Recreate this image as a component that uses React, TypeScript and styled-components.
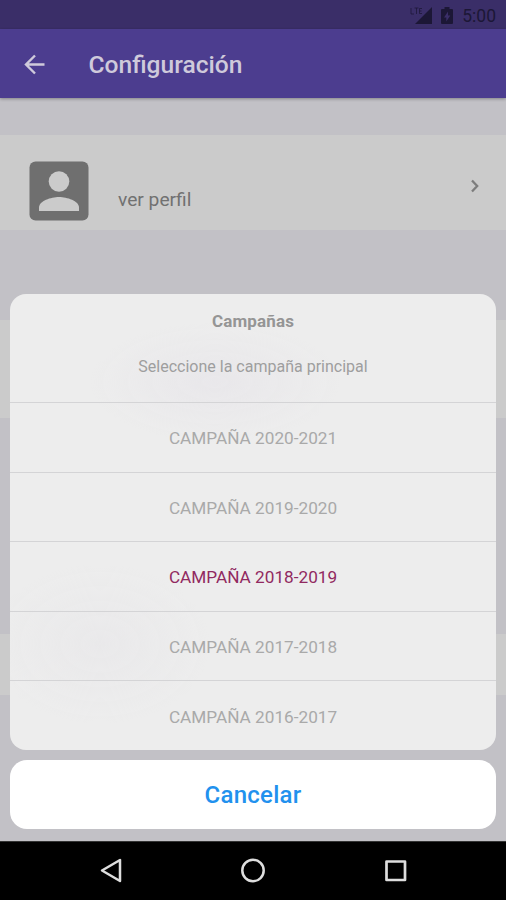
import React from "react";
import styled, { createGlobalStyle } from "styled-components";

const GlobalStyle = createGlobalStyle`
  *, *::before, *::after { box-sizing: border-box; }
  body { margin: 0; font-family: Roboto, "Noto Sans", sans-serif; }
  button { font-family: inherit; border: 0; padding: 0; background: none; }
`;

const Screen = styled.div`
  position: relative;
  display: flex;
  flex-direction: column;
  width: 506px;
  height: 900px;
  overflow: hidden;
  background: #c2c1c6;
`;

const StatusBar = styled.div`
  display: flex;
  align-items: center;
  justify-content: flex-end;
  height: 29px;
  flex: none;
  padding: 2px 10px 0 0;
  background: #3a2e68;
  color: #1c1736;
  font-size: 17.5px;
`;

const SignalIcon = styled.svg`
  margin-right: 9px;
`;

const BatteryIcon = styled.svg`
  margin-right: 9px;
`;

const AppBar = styled.header`
  display: flex;
  align-items: center;
  height: 69px;
  flex: none;
  padding: 2px 24px 0;
  background: #4c3d8f;
  color: #cfcadb;
  box-shadow: 0 1px 3px rgba(0, 0, 0, 0.32);
  z-index: 1;
`;

const Title = styled.h1`
  margin: 0 0 0 42.5px;
  font-size: 24.6px;
  font-weight: 500;
  line-height: 30px;
`;

const Content = styled.main`
  display: flex;
  flex-direction: column;
  flex: 1;
  padding-top: 37px;
`;

const ListCard = styled.section<{ $height: number; $gap: number }>`
  display: flex;
  align-items: center;
  height: ${(p) => p.$height}px;
  margin-bottom: ${(p) => p.$gap}px;
  padding: 0 26px 0 29px;
  flex: none;
  background: #cbcbcb;
`;

const Avatar = styled.svg`
  margin-top: 16px;
`;

const Chevron = styled.svg`
  margin-top: 6px;
`;

const ProfileLabel = styled.span`
  flex: 1;
  margin: 35px 0 0 29px;
  color: #717171;
  font-size: 19.2px;
  line-height: 24px;
`;

const Sheet = styled.div`
  position: absolute;
  left: 9.7px;
  right: 9.7px;
  bottom: 71.5px;
  display: flex;
  flex-direction: column;
  gap: 9.5px;
  z-index: 2;
`;

const OptionPanel = styled.div`
  display: flex;
  flex-direction: column;
  overflow: hidden;
  border-radius: 16px;
  height: 456.5px;
  background:
    radial-gradient(ellipse 125px 60px at 205px 88px, rgba(222, 217, 228, 0.28), transparent),
    radial-gradient(ellipse 110px 80px at 90px 350px, rgba(226, 224, 229, 0.3), transparent),
    #ededed;
`;

const SheetHeader = styled.div`
  display: flex;
  flex-direction: column;
  align-items: center;
  height: 108.5px;
  flex: none;
  padding-top: 15px;
  line-height: 24px;
`;

const SheetTitle = styled.h2`
  margin: 0 0 22px;
  color: #959595;
  font-size: 17px;
  font-weight: 700;
  line-height: 24px;
  letter-spacing: 0.15px;
`;

const SheetMessage = styled.p`
  margin: 0;
  color: #9e9e9e;
  font-size: 16px;
`;

const Option = styled.button<{ $selected?: boolean }>`
  flex: 1;
  border-top: 1.5px solid #d4d4d6;
  color: ${(p) => (p.$selected ? "#912960" : "#a9a9a9")};
  font-size: 17.2px;
  padding-top: 2px;
`;

const CancelButton = styled.button`
  height: 69px;
  border-radius: 17px;
  background: #fff;
  color: #2191ee;
  font-size: 24px;
  font-weight: 500;
  letter-spacing: 0.25px;
  padding-top: 2px;
`;

const NavBar = styled.nav`
  display: flex;
  align-items: center;
  justify-content: space-between;
  height: 59px;
  flex: none;
  padding: 0 98px;
  background: #000;
  border-top: 1px solid #343434;
`;

const campaigns = ["2020-2021", "2019-2020", "2018-2019", "2017-2018", "2016-2017"];
const selected = "2018-2019";

export default function App() {
  return (
    <>
      <GlobalStyle />
      <Screen>
        <StatusBar>
          <SignalIcon width="22" height="18" viewBox="0 0 22 18" fill="currentColor">
            <path d="M22 0v17H5z" />
            <path d="M1 1v6h3M4.500 1h4M6.500 1v6M12 1.500H9.500v5H12M9.500 4h2" fill="none" stroke="currentColor" strokeWidth="1" opacity=".75" />
          </SignalIcon>
          <BatteryIcon width="12" height="18" viewBox="0 0 12 18" fill="currentColor">
            <path fillRule="evenodd" d="M3.500 0h5v2H11q1 0 1 1v13q0 1-1 1H1q-1 0-1-1V3q0-1 1-1h2.500zM7 4.500 3 10.500h2.300v4L9.300 8.500H7z" />
          </BatteryIcon>
          <span>5:00</span>
        </StatusBar>
        <AppBar>
          <svg width="22" height="22" viewBox="0 0 22 22" fill="none" stroke="currentColor" strokeWidth="2.4">
            <path d="M20.500 10.500H2.500M11 1.500l-9 9 9 9" />
          </svg>
          <Title>Configuración</Title>
        </AppBar>
        <Content>
          <ListCard $height={95} $gap={90}>
            <Avatar width="60" height="60" viewBox="0 0 60 60">
              <rect x=".5" y=".5" width="59" height="59" rx="6" fill="#6f6f6f" />
              <circle cx="30" cy="20.500" r="10.300" fill="#cbcbcb" />
              <path d="M10 50v-3.500C10 40 22 36 30 36s20 4 20 10.500V50z" fill="#cbcbcb" />
            </Avatar>
            <ProfileLabel>ver perfil</ProfileLabel>
            <Chevron width="10" height="14" viewBox="0 0 10 14" fill="none" stroke="#7d7d7d" strokeWidth="2.300">
              <path d="M2 1.500 7.200 7 2 12.500" />
            </Chevron>
          </ListCard>
          <ListCard $height={98} $gap={216} />
          <ListCard $height={61} $gap={0} />
        </Content>
        <Sheet>
          <OptionPanel>
            <SheetHeader>
              <SheetTitle>Campañas</SheetTitle>
              <SheetMessage>Seleccione la campaña principal</SheetMessage>
            </SheetHeader>
            {campaigns.map((years) => (
              <Option key={years} $selected={years === selected}>
                CAMPAÑA {years}
              </Option>
            ))}
          </OptionPanel>
          <CancelButton>Cancelar</CancelButton>
        </Sheet>
        <NavBar>
          <svg width="26" height="26" viewBox="0 0 26 26" fill="none" stroke="#dedede" strokeWidth="2.500" strokeLinejoin="round">
            <path d="M22 2v21L4 12.500z" />
          </svg>
          <svg width="26" height="26" viewBox="0 0 26 26" fill="none" stroke="#dedede" strokeWidth="2.500">
            <circle cx="13" cy="12.500" r="10.700" />
          </svg>
          <svg width="26" height="26" viewBox="0 0 26 26" fill="none" stroke="#dedede" strokeWidth="2.700" strokeLinejoin="round">
            <rect x="4.500" y="3.500" width="18.500" height="18.500" />
          </svg>
        </NavBar>
      </Screen>
    </>
  );
}
